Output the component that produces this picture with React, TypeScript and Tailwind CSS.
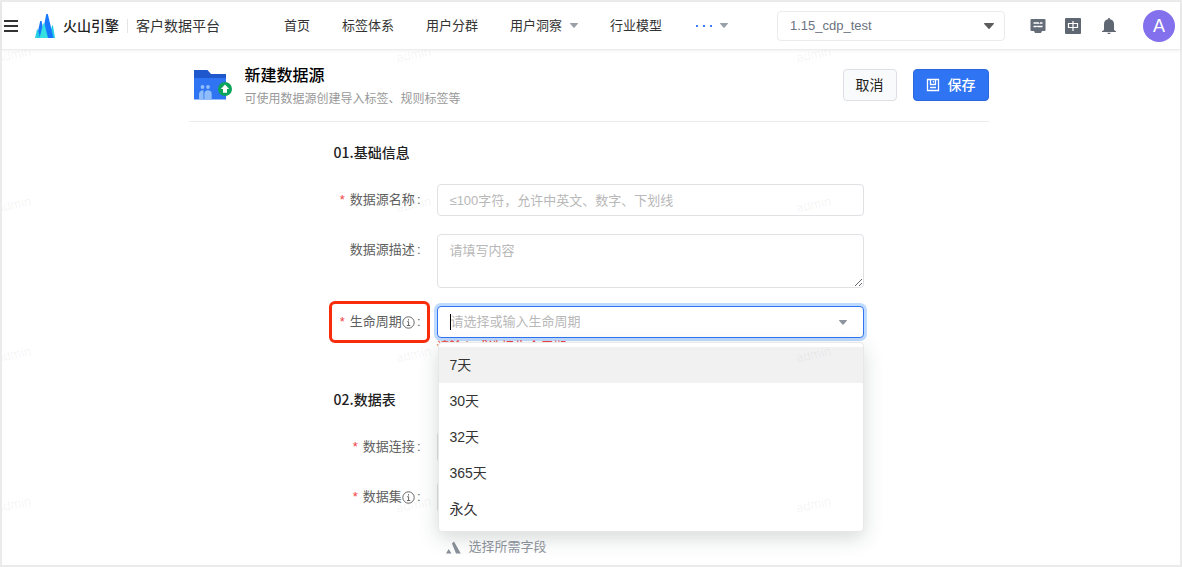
import React, { useState } from 'react';

const fontStack = "font-['Liberation_Sans','Noto_Sans_CJK_SC',sans-serif]";

interface NavItem {
  label: string;
  hasMenu?: boolean;
}

const navItems: NavItem[] = [
  { label: '首页' },
  { label: '标签体系' },
  { label: '用户分群' },
  { label: '用户洞察', hasMenu: true },
  { label: '行业模型' },
];

const lifeCycles = ['7天', '30天', '32天', '365天', '永久'];

const Caret: React.FC<{ className?: string }> = ({ className }) => (
  <svg viewBox="0 0 10 6" className={className} fill="currentColor" aria-hidden="true">
    <path d="M.6 0h8.8c.5 0 .7.5.4.9L5.5 5.7a.7.7 0 0 1-1 0L.2.9C-.1.5.1 0 .6 0z" />
  </svg>
);

const Logo = () => (
  <svg viewBox="0 0 20 24" className="h-6 w-5" aria-hidden="true">
    <path d="M5.200 7h1.400L10 24H1.500z" fill="#1677ff" />
    <path d="M2 15.500h1L5 24H0z" fill="#26d0e0" />
    <path d="M17 11.500h1L20 24h-6z" fill="#26d0e0" />
    <path d="M11.300 0h1.500L18.500 24h-12z" fill="#1677ff" />
    <path d="M8.200 9.500h1.200L13 24H4.600z" fill="#37e1e0" />
  </svg>
);

const FolderIcon = () => (
  <svg viewBox="0 0 39 32" className="h-8 w-[39px]" aria-hidden="true">
    <path d="M0 1h13.500l3.500 4h15V12H0z" fill="#1f57cc" />
    <path d="M0 9h32v21.500H0z" fill="#2f74f2" />
    <g fill="#8fbcfa">
      <circle cx="8.500" cy="18" r="1.900" />
      <circle cx="14" cy="18" r="1.900" />
      <path d="M5 30.500V25a3.600 3.600 0 0 1 4.500-3.500V30.500z" />
      <path d="M10.300 30.500V25a3.700 3.700 0 0 1 7.400 0v5.500z" />
    </g>
    <circle cx="31" cy="20" r="7" fill="#0ba45c" />
    <path d="m31 15.500 4.200 4.500h-2.200v3.700h-4V20h-2.200z" fill="#fff" />
  </svg>
);

const InfoIcon = () => (
  <svg viewBox="0 0 13 13" className="size-[13px]" fill="none" stroke="#666" aria-hidden="true">
    <circle cx="6.500" cy="6.500" r="5.700" />
    <path d="M5.200 5.700h1.400v3.600M4.900 9.500h3.400M6.500 3.200v1.300" />
  </svg>
);

const Watermark = () => (
  <div className="pointer-events-none absolute inset-0 z-20 overflow-hidden" aria-hidden="true">
    <div className="-ml-1.5 grid auto-rows-[150px] grid-cols-[repeat(3,400px)]">
      {Array.from({ length: 12 }, (_, index) => (
        <div key={index} className="pt-10">
          <span className="inline-block -rotate-12 text-[13px] leading-4 text-black/6">admin</span>
        </div>
      ))}
    </div>
  </div>
);

const TopBar = () => (
  <header className="relative z-30 flex h-12 items-center border-b border-[#ececec] bg-white pr-[5px] pl-0.5 text-[#333] shadow-[0_1px_3px_rgba(0,0,0,0.06)]">
    <button type="button" aria-label="菜单" className="flex w-3.5 flex-col gap-[3px]">
      <span className="h-0.5 bg-[#333]" />
      <span className="h-0.5 bg-[#333]" />
      <span className="h-0.5 bg-[#333]" />
    </button>
    <a href="#" className="ml-[17px] flex items-center">
      <Logo />
      <span className="ml-2 text-sm font-medium text-[#222]">火山引擎</span>
      <span className="mx-2 h-3.5 w-px bg-[#e5e5e5]" />
      <span className="text-sm">客户数据平台</span>
    </a>
    <nav className="ml-16 flex items-center gap-8 text-[13px]">
      {navItems.map((item) => (
        <a key={item.label} href="#" className="flex items-center gap-2 whitespace-nowrap">
          {item.label}
          {item.hasMenu && <Caret className="h-[5px] w-2 text-[#9aa0a8]" />}
        </a>
      ))}
      <button type="button" aria-label="更多" className="flex items-center gap-2">
        <span className="flex gap-[5px] pl-0.5">
          <span className="size-0.5 bg-[#3b7cf5]" />
          <span className="size-0.5 bg-[#3b7cf5]" />
          <span className="size-0.5 bg-[#3b7cf5]" />
        </span>
        <Caret className="h-[5px] w-2 text-[#9aa0a8]" />
      </button>
    </nav>
    <div className="ml-auto flex items-center">
      <div className="relative">
        <select
          aria-label="项目"
          className="h-[30px] w-[228px] appearance-none rounded border border-[#ebebeb] bg-white px-3 text-[13px] text-[#6b7280]"
        >
          <option>1.15_cdp_test</option>
        </select>
        <Caret className="pointer-events-none absolute top-3 right-[11px] h-1.5 w-2.5 text-[#5c5c5c]" />
      </div>
      <button type="button" aria-label="消息" className="ml-[25px]">
        <svg viewBox="0 0 16 16" className="size-4" aria-hidden="true">
          <path d="M1.500 1h13a1 1 0 0 1 1 1v10a1 1 0 0 1-1 1H12l-1 2H5l-1-2H1.500a1 1 0 0 1-1-1V2a1 1 0 0 1 1-1z" fill="#646c78" />
          <path d="M3.500 5h9M3.500 8.500h9" stroke="#fff" strokeWidth="1.500" />
          <path d="M9.500 3.800v1.600M7 8.800v1.500" stroke="#646c78" />
        </svg>
      </button>
      <button type="button" aria-label="语言" className="ml-[19px]">
        <svg viewBox="0 0 16 16" className="size-4" aria-hidden="true">
          <rect width="16" height="16" rx="1" fill="#5f6772" />
          <path d="M3.500 5.500h9v4h-9zM8 3v10" fill="none" stroke="#fff" strokeWidth="1.200" />
        </svg>
      </button>
      <button type="button" aria-label="通知" className="ml-5">
        <svg viewBox="0 0 16 16" className="size-4" fill="#5f6772" aria-hidden="true">
          <path d="M7.200 0h1.600v1.300A5 5 0 0 1 13 6.200V12l2 1.200v.8H1v-.8L3 12V6.200a5 5 0 0 1 4.200-4.900zM6 14.800h4L8.800 16H7.200z" />
        </svg>
      </button>
      <button type="button" className="ml-[26px] size-8 rounded-full bg-[#8370ec] text-lg text-white">
        A
      </button>
    </div>
  </header>
);

const PageHeader = () => (
  <div className="flex items-start border-b border-[#ebebeb] pt-[13px] pb-3">
    <div className="mt-1.5 ml-[5px]">
      <FolderIcon />
    </div>
    <div className="ml-3">
      <h1 className="text-base leading-[26px] font-medium text-black">新建数据源</h1>
      <p className="text-xs leading-5 text-[#999]">可使用数据源创建导入标签、规则标签等</p>
    </div>
    <div className="mt-1.5 ml-auto flex gap-4 text-sm">
      <button type="button" className="h-8 rounded border border-[#dcdfe4] bg-[#f9fafb] px-3 text-[#222]">
        取消
      </button>
      <button
        type="submit"
        form="source-form"
        className="flex h-8 items-center gap-2 rounded border border-[#2a68dc] bg-[#2f74f2] px-3 font-medium text-white"
      >
        <svg viewBox="0 0 14 14" className="size-3.5" fill="none" stroke="currentColor" strokeWidth="1.300" aria-hidden="true">
          <path d="M1.500 1.500h11v11h-11zM4.500 1.500v5h5v-5M7.500 3v1.500M4 9.500h6" />
        </svg>
        保存
      </button>
    </div>
  </div>
);

interface FieldProps {
  id: string;
  label: string;
  required?: boolean;
  info?: boolean;
  highlighted?: boolean;
  children: React.ReactNode;
}

const Field: React.FC<FieldProps> = ({ id, label, required, info, highlighted, children }) => (
  <div className="grid grid-cols-[87px_427px] items-start gap-4">
    <div className="relative">
      <label htmlFor={id} className="flex h-8 items-center justify-end whitespace-nowrap text-[#606060]">
        {required && <span className="mr-[5px] text-[#f04343]">*</span>}
        {label}
        {info && <InfoIcon />}
        <span className="ml-0.5">:</span>
      </label>
      {highlighted && (
        <div className="pointer-events-none absolute -inset-y-[5px] -right-[9px] -left-[5px] rounded-md border-3 border-[#f92c0c]" />
      )}
    </div>
    {children}
  </div>
);

const inputClass =
  'block w-full rounded border border-[#dfe1e5] bg-white px-3 outline-none placeholder:text-[#b8b8b8]';

const SourceForm = () => {
  const [lifeCycle, setLifeCycle] = useState('');

  return (
    <form id="source-form" className="ml-[145px] text-[13px]" onSubmit={(e) => e.preventDefault()}>
      <h2 className="mt-5 text-sm leading-5 font-medium text-[#222]">
        <span className="font-['Noto_Sans_CJK_SC']">01.基础信息</span>
      </h2>
      <div className="mt-[21px] flex flex-col gap-[18px]">
        <Field id="name" label="数据源名称" required>
          <input id="name" className={`${inputClass} h-8`} placeholder="≤100字符，允许中英文、数字、下划线" />
        </Field>
        <Field id="desc" label="数据源描述">
          <textarea id="desc" className={`${inputClass} h-[54px] resize py-1.5 leading-5`} placeholder="请填写内容" />
        </Field>
        <Field id="life" label="生命周期" required info highlighted>
          <div className="relative">
            <div className="flex h-8 items-center rounded border border-[#2f74f2] bg-white pr-4 pl-3 ring-3 ring-[#bedaff]">
              <span className="h-4 w-px bg-black" />
              <input
                id="life"
                role="combobox"
                aria-expanded="true"
                aria-controls="life-options"
                value={lifeCycle}
                onChange={(e) => setLifeCycle(e.target.value)}
                placeholder="请选择或输入生命周期"
                className="min-w-0 flex-1 outline-none placeholder:text-[#b8b8b8]"
              />
              <Caret className="h-[5px] w-2 text-[#8f959e]" />
            </div>
            <p className="leading-[18px] text-[#f04343]">请输入或选择生命周期</p>
            <ul
              id="life-options"
              role="listbox"
              className="absolute top-9 right-0 left-px z-10 rounded border border-[#e8e8e8] bg-white py-1 text-sm text-[#333] shadow-[0_6px_20px_rgba(30,50,45,0.18)]"
            >
              {lifeCycles.map((item, index) => (
                <li
                  key={item}
                  role="option"
                  aria-selected={index === 0}
                  onClick={() => setLifeCycle(item)}
                  className={`flex h-9 cursor-pointer items-center px-[11px] ${index === 0 ? 'bg-[#f1f1f1]' : ''}`}
                >
                  {item}
                </li>
              ))}
            </ul>
          </div>
        </Field>
      </div>

      <h2 className="mt-[33px] text-sm leading-5 font-medium text-[#222]">
        <span className="font-['Noto_Sans_CJK_SC']">02.数据表</span>
      </h2>
      <div className="mt-[21px] flex flex-col gap-[18px]">
        <Field id="connection" label="数据连接" required>
          <select id="connection" className={`${inputClass} h-8 appearance-none`} />
        </Field>
        <Field id="dataset" label="数据集" required info>
          <select id="dataset" className={`${inputClass} h-8 appearance-none`} />
        </Field>
      </div>
      <div className="mt-6 ml-28 flex items-center gap-2 leading-5 text-[#8f959e]">
        <svg viewBox="0 0 15 13" className="h-[13px] w-[15px]" fill="#8a919b" aria-hidden="true">
          <path d="M2.700 8 5.500 12.500H0zM6 2.500 8 .5l6.800 12H10z" />
        </svg>
        选择所需字段
      </div>
    </form>
  );
};

export default function App() {
  return (
    <div className={`relative min-h-screen border-2 border-[#ebebeb] bg-white ${fontStack}`}>
      <TopBar />
      <Watermark />
      <main className="pr-[5px] pb-1">
        <div className="mx-auto max-w-[800px]">
          <PageHeader />
          <SourceForm />
        </div>
      </main>
    </div>
  );
}
